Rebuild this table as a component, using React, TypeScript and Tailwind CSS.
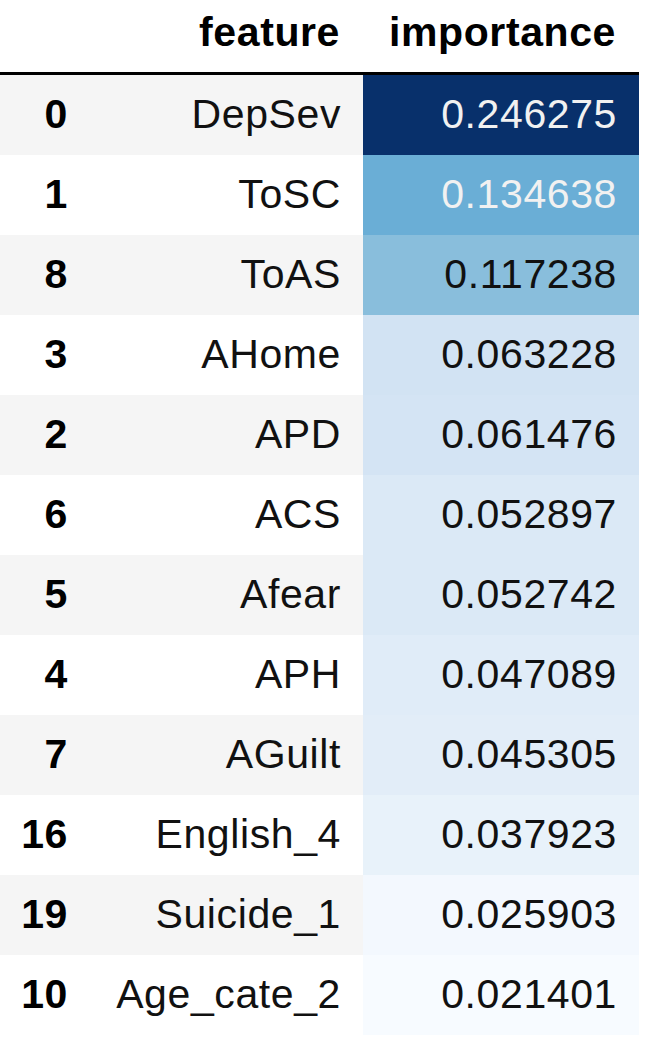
import React from "react";

type Row = { idx: string; feature: string; value: string; bg: string; light?: boolean };

const rows: Row[] = [
  { idx: "0", feature: "DepSev", value: "0.246275", bg: "bg-[#08306b]", light: true },
  { idx: "1", feature: "ToSC", value: "0.134638", bg: "bg-[#6aaed6]", light: true },
  { idx: "8", feature: "ToAS", value: "0.117238", bg: "bg-[#89bedc]" },
  { idx: "3", feature: "AHome", value: "0.063228", bg: "bg-[#d2e3f3]" },
  { idx: "2", feature: "APD", value: "0.061476", bg: "bg-[#d4e4f4]" },
  { idx: "6", feature: "ACS", value: "0.052897", bg: "bg-[#dbe9f6]" },
  { idx: "5", feature: "Afear", value: "0.052742", bg: "bg-[#dbe9f6]" },
  { idx: "4", feature: "APH", value: "0.047089", bg: "bg-[#e0ecf8]" },
  { idx: "7", feature: "AGuilt", value: "0.045305", bg: "bg-[#e2edf8]" },
  { idx: "16", feature: "English_4", value: "0.037923", bg: "bg-[#e8f2fa]" },
  { idx: "19", feature: "Suicide_1", value: "0.025903", bg: "bg-[#f3f8fe]" },
  { idx: "10", feature: "Age_cate_2", value: "0.021401", bg: "bg-[#f7fbff]" },
];

export default function App() {
  return (
    <div className="w-[666px] h-[1047px] bg-white overflow-hidden font-['Liberation_Sans',Arial,sans-serif] text-[41px] tracking-[0.6px] text-[#111111]">
      <div className="grid grid-cols-[90px_273px_276px] w-[639px]">
        <div className="h-[75px] border-b-[3px] border-black" />
        <div className="h-[75px] border-b-[3px] border-black flex items-center justify-end pr-[23px] pb-[6px] font-bold text-black">
          feature
        </div>
        <div className="h-[75px] border-b-[3px] border-black flex items-center justify-end pr-[23px] pb-[6px] font-bold text-black">
          importance
        </div>
        {rows.map((r, i) => {
          const stripe = i % 2 === 0 ? "bg-[#f5f5f5]" : "bg-white";
          return (
            <React.Fragment key={r.idx}>
              <div className={`h-[80px] ${stripe} flex items-center justify-end pr-[22px] font-bold text-black`}>
                {r.idx}
              </div>
              <div className={`h-[80px] ${stripe} flex items-center justify-end pr-[22px]`}>
                {r.feature}
              </div>
              <div
                className={`h-[80px] ${r.bg} flex items-center justify-end pr-[22px] ${
                  r.light ? "text-[#f1f1f1]" : "text-[#111111]"
                }`}
              >
                {r.value}
              </div>
            </React.Fragment>
          );
        })}
      </div>
    </div>
  );
}
